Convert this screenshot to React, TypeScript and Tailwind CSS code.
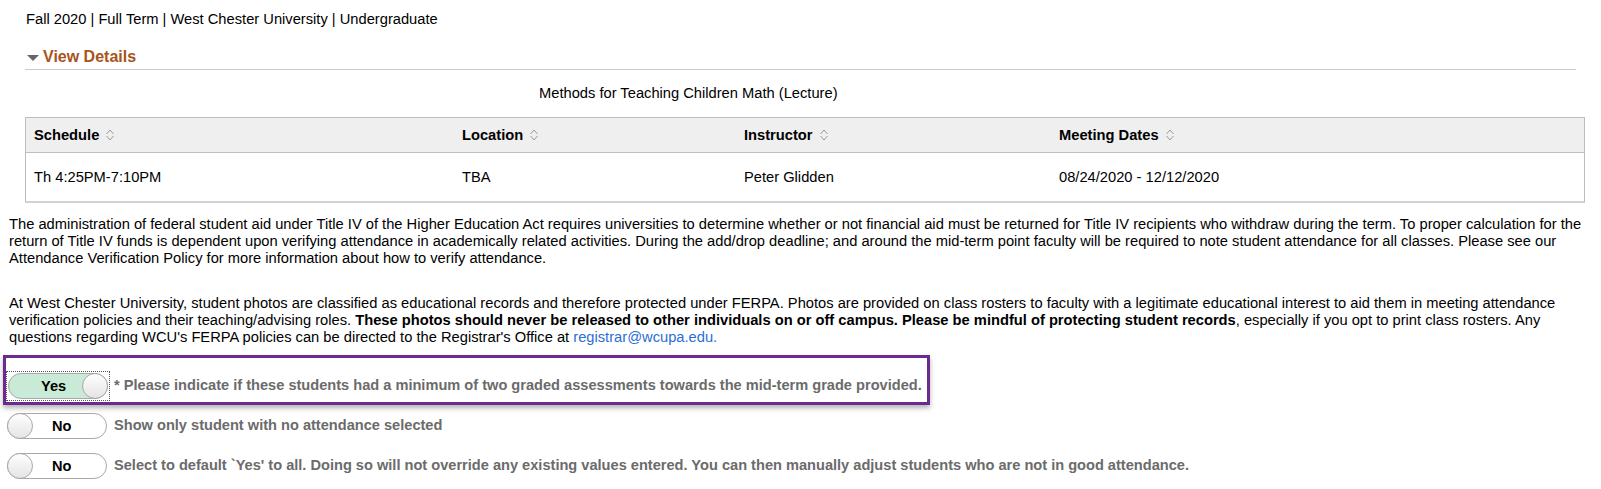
import React from "react";

function SortIcon() {
  return (
    <svg width="10" height="12" viewBox="0 0 10 12" className="inline-block ml-[6px] align-[-1px]">
      <polyline points="1.5,5 5,1 8.5,5" fill="none" stroke="#9a9a9a" strokeWidth="1" />
      <polyline points="1.5,7 5,11 8.5,7" fill="none" stroke="#9a9a9a" strokeWidth="1" />
    </svg>
  );
}

function Toggle({ on }: { on: boolean }) {
  return (
    <div
      className={`relative w-[100px] h-[26px] rounded-full border border-[#a9a9a9] flex items-center ${
        on ? "bg-[#c8ead6]" : "bg-white"
      }`}
    >
      <div
        className={`absolute top-[-1px] ${on ? "right-[-1px]" : "left-[-1px]"} w-[26px] h-[26px] rounded-full border border-[#a9a9a9] bg-gradient-to-b from-white to-[#e4e4e4]`}
      />
      <span
        className={`text-[14.6px] font-bold text-black leading-[17px] ${on ? "ml-[32px]" : "ml-[44px]"}`}
      >
        {on ? "Yes" : "No"}
      </span>
    </div>
  );
}

export default function App() {
  const font = { fontFamily: '"Liberation Sans", Arial, sans-serif' };
  return (
    <div className="bg-white w-[1601px] h-[489px] overflow-hidden text-black" style={font}>
      <div className="pl-[26px] pt-[11px] text-[14.7px] leading-[17px]">
        Fall 2020 | Full Term | West Chester University | Undergraduate
      </div>

      <div className="mx-[25px] mt-[20px] border-b border-[#cccccc] pb-[3px] flex items-center">
        <svg width="12" height="7" viewBox="0 0 12 7" className="ml-[2px] mr-[4px] mt-[2px]">
          <polygon points="0,0 12,0 6,6" fill="#666666" />
        </svg>
        <span className="text-[16px] font-bold text-[#a8541b] leading-[18px]">View Details</span>
      </div>

      <div className="pl-[539px] mt-[15px] text-[14.7px] leading-[17px]">
        Methods for Teaching Children Math (Lecture)
      </div>

      <div className="ml-[25px] w-[1560px] mt-[15px] border border-[#bdbdbd] border-b-2 border-b-[#d2d2d2] text-[14.7px]">
        <div className="flex h-[35px] items-center bg-[#efefef] border-b border-[#bdbdbd] font-bold">
          <div className="w-[428px] pl-[8px]">Schedule<SortIcon /></div>
          <div className="w-[282px] pl-[8px]">Location<SortIcon /></div>
          <div className="w-[315px] pl-[8px]">Instructor<SortIcon /></div>
          <div className="flex-1 pl-[8px]">Meeting Dates<SortIcon /></div>
        </div>
        <div className="flex h-[48px] items-center">
          <div className="w-[428px] pl-[8px]">Th 4:25PM-7:10PM</div>
          <div className="w-[282px] pl-[8px]">TBA</div>
          <div className="w-[315px] pl-[8px]">Peter Glidden</div>
          <div className="flex-1 pl-[8px]">08/24/2020 - 12/12/2020</div>
        </div>
      </div>

      <div className="px-[9px] mt-[13px] text-[14.7px] leading-[17px] w-[1600px]">
        <p>
          The administration of federal student aid under Title IV of the Higher Education Act requires universities to
          determine whether or not financial aid must be returned for Title IV recipients who withdraw during the term. To
          proper calculation for the return of Title IV funds is dependent upon verifying attendance in academically related
          activities. During the add/drop deadline; and around the mid-term point faculty will be required to note student
          attendance for all classes. Please see our Attendance Verification Policy for more information about how to verify
          attendance.
        </p>
        <p className="mt-[28px]">
          At West Chester University, student photos are classified as educational records and therefore protected under
          FERPA. Photos are provided on class rosters to faculty with a legitimate educational interest to aid them in meeting
          attendance verification policies and their teaching/advising roles.{" "}
          <b>
            These photos should never be released to other individuals on or off campus. Please be mindful of protecting
            student records
          </b>
          , especially if you opt to print class rosters. Any questions regarding WCU's FERPA policies can be directed to the
          Registrar's Office at <span className="text-[#2c6ed5]">registrar@wcupa.edu.</span>
        </p>
      </div>

      <div className="ml-[3px] mt-[9px] w-[927px] h-[50px] border-[3px] border-[#6a2a8e] shadow-[0_3px_5px_rgba(0,0,0,0.3)] pt-[13px]">
        <div className="flex items-center">
          <div className="p-[1px] border border-dotted border-[#555]">
            <Toggle on={true} />
          </div>
          <span className="ml-[4px] text-[14.6px] font-bold text-[#6b6b6b] whitespace-nowrap">
            * Please indicate if these students had a minimum of two graded assessments towards the mid-term grade provided.
          </span>
        </div>
      </div>

      <div className="ml-[7px] mt-[8px] flex items-center">
        <Toggle on={false} />
        <span className="ml-[7px] text-[14.6px] font-bold text-[#6b6b6b]">
          Show only student with no attendance selected
        </span>
      </div>

      <div className="ml-[7px] mt-[14px] flex items-center">
        <Toggle on={false} />
        <span className="ml-[7px] text-[14.6px] font-bold text-[#6b6b6b]">
          Select to default `Yes' to all. Doing so will not override any existing values entered. You can then manually adjust
          students who are not in good attendance.
        </span>
      </div>
    </div>
  );
}
